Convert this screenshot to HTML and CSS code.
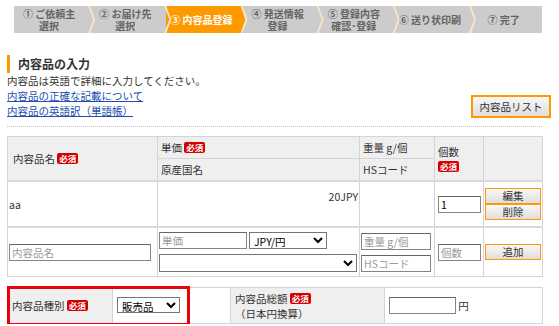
FILE: index.html
```html
<!DOCTYPE html>
<html lang="ja">
<head>
    <meta charset="UTF-8">
    <meta name="viewport" content="width=device-width, initial-scale=1.0">
    <title>内容品登録</title>
    <link rel="stylesheet" href="styles.css">
</head>
<body>
<div class="page">

    <ol class="steps">
        <li class="step">① ご依頼主<br>選択</li>
        <li class="step">② お届け先<br>選択</li>
        <li class="step active">③ 内容品登録</li>
        <li class="step">④ 発送情報<br>登録</li>
        <li class="step">⑤ 登録内容<br>確認･登録</li>
        <li class="step">⑥ 送り状印刷</li>
        <li class="step last">⑦ 完了</li>
    </ol>

    <div class="intro">
        <div class="intro-text">
            <h3 class="section-title">内容品の入力</h3>
            <p>内容品は英語で詳細に入力してください。</p>
            <a href="#">内容品の正確な記載について</a>
            <a href="#">内容品の英語訳（単語帳）</a>
        </div>
        <button class="btn btn-list">内容品リスト</button>
    </div>

    <table class="items">
        <colgroup>
            <col class="col-name">
            <col class="col-price">
            <col class="col-weight">
            <col class="col-qty">
            <col class="col-act">
        </colgroup>
        <thead>
            <tr>
                <th rowspan="2" class="th-name">内容品名 <span class="req">必須</span></th>
                <th>単価 <span class="req">必須</span></th>
                <th>重量 g/個</th>
                <th rowspan="2" class="th-qty">個数<br><span class="req">必須</span></th>
                <th rowspan="2"></th>
            </tr>
            <tr class="head-last">
                <th>原産国名</th>
                <th>HSコード</th>
            </tr>
        </thead>
        <tbody>
            <tr class="item-row">
                <td class="td-name">aa</td>
                <td class="td-price">20JPY</td>
                <td></td>
                <td class="td-qty"><input type="text" class="in-qty" value="1"></td>
                <td class="td-act">
                    <button class="btn btn-small">編集</button>
                    <button class="btn btn-small">削除</button>
                </td>
            </tr>
            <tr class="new-row">
                <td class="td-name"><input type="text" class="in-name" placeholder="内容品名"></td>
                <td class="td-stack">
                    <div class="line">
                        <input type="text" class="in-price" placeholder="単価">
                        <select class="sel-cur">
                            <option>JPY/円</option>
                        </select>
                    </div>
                    <div class="line">
                        <select class="sel-country">
                            <option></option>
                        </select>
                    </div>
                </td>
                <td class="td-stack">
                    <div class="line"><input type="text" class="in-weight" placeholder="重量 g/個"></div>
                    <div class="line"><input type="text" class="in-weight" placeholder="HSコード"></div>
                </td>
                <td class="td-qty"><input type="text" class="in-qty" placeholder="個数"></td>
                <td class="td-act"><button class="btn btn-small">追加</button></td>
            </tr>
        </tbody>
    </table>

    <div class="summary-wrap">
        <table class="summary">
            <colgroup>
                <col class="col-kind-label">
                <col class="col-kind">
                <col class="col-total-label">
                <col class="col-total">
            </colgroup>
            <tr>
                <th>内容品種別 <span class="req">必須</span></th>
                <td>
                    <select class="sel-kind">
                        <option>販売品</option>
                    </select>
                </td>
                <th class="th-total">内容品総額 <span class="req">必須</span><br>（日本円換算）</th>
                <td><input type="text" class="in-total"> 円</td>
            </tr>
        </table>
        <div class="highlight"></div>
    </div>

</div>
</body>
</html>
```

FILE: styles.css
```css
body {
    margin: 0;
    font-family: "Noto Sans CJK JP", "Noto Sans", sans-serif;
    font-size: 10.5px;
    color: #333;
    background: #fff;
}
.page {
    width: 535px;
    padding: 6px 0 0 7px;
}

/* step bar */
.steps {
    display: flex;
    height: 27px;
    margin: 0 0 0 7px;
    padding: 0;
    list-style: none;
}
.step {
    position: relative;
    flex: 1;
    display: flex;
    align-items: center;
    justify-content: center;
    padding-right: 6px;
    background: #cccccc;
    color: #646464;
    font-size: 10px;
    font-weight: bold;
    line-height: 12px;
    text-align: center;
}
.step::after {
    content: "";
    position: absolute;
    top: 0;
    left: calc(100% - 2px);
    width: 7px;
    height: 100%;
    background: #fce5c4;
    clip-path: polygon(0 0, 2px 0, 7px 50%, 2px 100%, 0 100%, 5px 50%);
    z-index: 2;
}
.step.active {
    background: #ff9900;
    color: #fff;
}
.step.active::before {
    content: "";
    position: absolute;
    top: 0;
    left: calc(100% - 2px);
    width: 5px;
    height: 100%;
    background: #ff9900;
    clip-path: polygon(0 0, 100% 50%, 0 100%);
    z-index: 1;
}
.step.last {
    flex: 0 0 65px;
}
.step.last::after {
    display: none;
}

/* intro */
.intro {
    display: flex;
    justify-content: space-between;
    align-items: flex-end;
    margin-top: 22px;
    padding-bottom: 8px;
    border-bottom: 1px dotted #c4c4c4;
}
.section-title {
    margin: 0;
    padding-left: 8px;
    border-left: 3px solid #ff9900;
    font-size: 12px;
    line-height: 18px;
    color: #333;
}
.intro-text p {
    margin: 0;
    line-height: 15px;
}
.intro-text a {
    display: block;
    color: #1d4fae;
    line-height: 15px;
}

.btn {
    font: inherit;
    color: #333;
    border: 1px solid #ff9900;
    background: linear-gradient(#f8f8f8, #dedede);
    padding: 0;
    cursor: pointer;
}
.btn-list {
    width: 80px;
    height: 23px;
    margin-right: -9px;
    border-width: 2px;
}
.btn-small {
    display: block;
    width: 56px;
    height: 16px;
    line-height: 14px;
}

.req {
    display: inline-block;
    padding: 0 2px;
    background: #d40000;
    color: #fff;
    font-size: 8.5px;
    font-weight: bold;
    line-height: 11px;
    border-radius: 2px;
    vertical-align: 1px;
}

/* form controls */
input[type="text"] {
    box-sizing: border-box;
    height: 17px;
    margin: 0;
    padding: 0 2px;
    border: 1px solid #858585;
    border-top-color: #666;
    font: inherit;
    color: #000;
}
input::placeholder {
    color: #9a9a9a;
}
select {
    box-sizing: border-box;
    height: 17px;
    margin: 0;
    padding: 0;
    font: inherit;
    color: #000;
    border: 1px solid #767676;
    background: #fff;
}

/* items table */
.items {
    width: 535px;
    margin-top: 9px;
    border-collapse: collapse;
    table-layout: fixed;
}
.col-name { width: 150px; }
.col-price { width: 202px; }
.col-weight { width: 75px; }
.col-qty { width: 49px; }
.col-act { width: 59px; }

.items th,
.items td {
    border: 1px solid #d4d4d4;
    padding: 0 3px;
    text-align: left;
    font-weight: normal;
}
.items th {
    height: 21px;
    background: #efefef;
}
.items .th-name {
    padding-left: 5px;
}
.items .th-qty {
    line-height: 15px;
}
.head-last th,
.items thead .th-name,
.items thead .th-qty,
.items thead th:last-child {
    border-bottom: 2px solid #d9d9d9;
}
.item-row td {
    height: 37px;
    border-bottom: 2px solid #d9d9d9;
}
.items .td-name {
    padding-left: 1px;
}
.items .td-price {
    vertical-align: top;
    text-align: right;
    padding: 7px 1px 0 0;
}
.items .td-act {
    padding: 0 1px;
}
.new-row td {
    height: 48px;
}
.items .td-stack {
    padding: 0 1px;
}
.line {
    display: flex;
    gap: 2px;
}
.line + .line {
    margin-top: 5px;
}
.in-name { width: 142px; }
.in-price { width: 88px; }
.sel-cur { width: 78px; }
.sel-country { width: 198px; height: 18px; }
.in-weight { width: 70px; }
.in-qty { width: 43px; height: 16px; }

/* summary table */
.summary-wrap {
    position: relative;
    margin-top: 10px;
}
.summary {
    width: 535px;
    border-collapse: collapse;
    table-layout: fixed;
}
.col-kind-label { width: 105px; }
.col-kind { width: 118px; }
.col-total-label { width: 154px; }
.col-total { width: 158px; }
.summary th,
.summary td {
    height: 35px;
    border: 1px solid #d4d4d4;
    padding: 0 4px;
    text-align: left;
    font-weight: normal;
}
.summary th {
    background: #efefef;
}
.summary .th-total {
    line-height: 15px;
}
.sel-kind {
    width: 63px;
    height: 16px;
}
.in-total {
    width: 67px;
}
.highlight {
    position: absolute;
    left: 0;
    top: -1px;
    width: 183px;
    height: 40px;
    box-sizing: border-box;
    border: 3px solid #e8000b;
}
```
